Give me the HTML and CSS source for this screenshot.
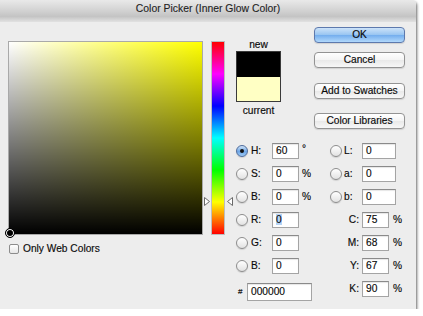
FILE: index.html
```html
<!DOCTYPE html>
<html>
<head>
<meta charset="utf-8">
<link rel="stylesheet" href="styles.css">
</head>
<body>
<div class="window">
  <div class="titlebar">Color Picker (Inner Glow Color)</div>
  <div class="content">
    <div class="left">
      <div class="field"><span class="marker"></span></div>
      <div class="webcolors"><span class="check"></span><span>Only Web Colors</span></div>
    </div>
    <div class="huecol">
      <div class="hue"></div>
      <svg class="tri tri-l" width="6" height="9" viewBox="0 0 6 9"><path d="M0.5 0.5 L5.5 4.5 L0.5 8.5 Z" fill="#fff" stroke="#6a6a6a" stroke-width="1"/></svg>
      <svg class="tri tri-r" width="6" height="9" viewBox="0 0 6 9"><path d="M5.5 0.5 L0.5 4.5 L5.5 8.5 Z" fill="#fff" stroke="#6a6a6a" stroke-width="1"/></svg>
    </div>
    <div class="right">
      <div class="top">
        <div class="swatchcol">
          <div class="lbl">new</div>
          <div class="swatch"><div class="sw-new"></div><div class="sw-cur"></div></div>
          <div class="lbl lbl-cur">current</div>
        </div>
        <div class="buttons">
          <div class="btn btn-ok">OK</div>
          <div class="btn">Cancel</div>
          <div class="btn">Add to Swatches</div>
          <div class="btn">Color Libraries</div>
        </div>
      </div>
      <div class="fields">
        <span class="radio on"></span><span class="fl">H:</span><span class="inp">60</span><span class="unit deg">°</span>
        <span class="radio"></span><span class="fl fl2">L:</span><span class="inp">0</span>

        <span class="radio"></span><span class="fl">S:</span><span class="inp">0</span><span class="unit">%</span>
        <span class="radio"></span><span class="fl fl2">a:</span><span class="inp">0</span>

        <span class="radio"></span><span class="fl">B:</span><span class="inp">0</span><span class="unit">%</span>
        <span class="radio"></span><span class="fl fl2">b:</span><span class="inp">0</span>

        <span class="radio"></span><span class="fl">R:</span><span class="inp"><span class="sel">0</span></span><span class="unit"></span>
        <span class="cl">C:</span><span class="cm"><span class="inp inp-c">75</span><span>%</span></span>

        <span class="radio"></span><span class="fl">G:</span><span class="inp">0</span><span class="unit"></span>
        <span class="cl">M:</span><span class="cm"><span class="inp inp-c">68</span><span>%</span></span>

        <span class="radio"></span><span class="fl">B:</span><span class="inp">0</span><span class="unit"></span>
        <span class="cl">Y:</span><span class="cm"><span class="inp inp-c">67</span><span>%</span></span>

        <span class="hex"><span class="hash">#</span><span class="inp inp-hex">000000</span></span>
        <span class="cl">K:</span><span class="cm"><span class="inp inp-c">90</span><span>%</span></span>
      </div>
    </div>
  </div>
</div>
</body>
</html>
```

FILE: styles.css
```css
* { box-sizing: border-box; }
html, body { margin: 0; padding: 0; background: #fff; }
body {
  font-family: "Liberation Sans", Arial, sans-serif;
  font-size: 10.2px;
  color: #0a0a0a;
  -webkit-text-stroke: 0.15px #0a0a0a;
}
.window {
  width: 416px;
  height: 309px;
  background: #ededed;
  border-radius: 0 4px 0 0;
  box-shadow: 1px 2px 3px rgba(0, 0, 0, 0.6);
}
.titlebar {
  height: 22px;
  line-height: 18px;
  font-size: 10.4px;
  text-align: center;
  color: #222;
  -webkit-text-stroke: 0.1px #222;
  background: linear-gradient(#e9e9e9, #d6d6d6 40%, #c4c4c4 75%, #e2e2e2);
  border-radius: 0 4px 0 0;
}
.content {
  display: flex;
  padding: 5px 11px 0 8px;
}
.left {
  width: 195px;
  margin-top: 14px;
}
.field {
  position: relative;
  width: 195px;
  height: 194px;
  border: 1px solid #a9a9a9;
  background: linear-gradient(to bottom, rgba(0, 0, 0, 0), #000), linear-gradient(to right, #fff, #ff0);
}
.marker {
  position: absolute;
  left: -4px;
  top: 186px;
  width: 10px;
  height: 10px;
  border-radius: 50%;
  border: 1px solid #000;
  box-shadow: inset 0 0 0 1px #fff;
  background: #000;
}
.webcolors {
  display: flex;
  align-items: center;
  gap: 4px;
  margin-top: 8px;
  padding-left: 1px;
}
.check {
  width: 10px;
  height: 10px;
  border: 1px solid #8c8c8c;
  border-radius: 2px;
  background: linear-gradient(#fff, #e6e6e6);
}
.huecol {
  position: relative;
  margin-left: 8px;
  margin-top: 14px;
}
.hue {
  width: 14px;
  height: 194px;
  border: 1px solid #bdbdbd;
  background: linear-gradient(to bottom, #f00 0%, #f0f 16.67%, #00f 33.33%, #0ff 50%, #0f0 66.67%, #ff0 83.33%, #f00 100%);
}
.tri { position: absolute; top: 156px; }
.tri-l { left: -7px; }
.tri-r { left: 16px; }
.right {
  width: 169px;
  margin-left: 11px;
}
.top {
  display: flex;
  justify-content: space-between;
}
.swatchcol {
  width: 45px;
  margin-top: 12px;
}
.lbl {
  height: 12px;
  line-height: 12px;
  text-align: center;
}
.lbl-cur { margin-top: 3px; }
.swatch {
  height: 51px;
  border: 1px solid #3a3a3a;
  display: flex;
  flex-direction: column;
}
.sw-new { flex: 1; background: #000; }
.sw-cur { flex: 1; background: #ffffc4; }
.buttons {
  width: 91px;
  display: flex;
  flex-direction: column;
  gap: 14.5px;
}
.btn {
  height: 16px;
  line-height: 14px;
  text-align: center;
  border: 1px solid #939393;
  border-radius: 4px;
  background: linear-gradient(#ffffff, #f4f4f4 50%, #e9e9e9 52%, #f7f7f7);
  box-shadow: 0 1px 1px rgba(0, 0, 0, 0.12);
}
.btn-ok {
  margin-bottom: -5.5px;
  border-color: #5d79ad;
  background: linear-gradient(#cde3f9, #97c4f1 50%, #74aeee 52%, #b1d8fb);
}
.fields {
  display: grid;
  grid-template-columns: 12px 24px 27px 31px 12px 20px 34px;
  grid-auto-rows: 16px;
  row-gap: 7px;
  align-items: center;
  margin-top: 13.5px;
}
.radio {
  position: relative;
  width: 12px;
  height: 12px;
  border-radius: 50%;
  border: 1px solid #8d8d8d;
  background: linear-gradient(#ffffff, #e2e2e2);
  box-shadow: 0 1px 1px rgba(0, 0, 0, 0.12);
}
.radio.on {
  border-color: #4f6c9c;
  background: linear-gradient(#cfe3f8, #6ea6e6 55%, #9cc9f5);
}
.radio.on::after {
  content: "";
  position: absolute;
  left: 3px;
  top: 3px;
  width: 4px;
  height: 4px;
  border-radius: 50%;
  background: #111;
}
.fl { padding-left: 3px; }
.fl2 { padding-left: 2px; }
.inp {
  display: block;
  height: 16px;
  line-height: 14px;
  padding-left: 3px;
  background: #fff;
  border: 1px solid #a4a4a4;
  border-top-color: #8a8a8a;
  box-shadow: inset 0 1px 1px rgba(0, 0, 0, 0.1);
}
.unit { padding-left: 3px; }
.deg { align-self: start; line-height: 12px; }
.sel { background: #b5d3f5; }
.cl {
  grid-column: span 2;
  text-align: right;
  padding-right: 3px;
}
.cm {
  display: flex;
  align-items: center;
  gap: 4px;
  white-space: nowrap;
}
.inp-c { width: 27px; flex: none; }
.hex {
  grid-column: 1 / 5;
  align-self: start;
  margin-top: 2px;
  display: flex;
  align-items: center;
  padding-left: 2px;
}
.hash { width: 9px; font-size: 8px; }
.inp-hex { width: 65px; height: 18px; line-height: 16px; }
```
